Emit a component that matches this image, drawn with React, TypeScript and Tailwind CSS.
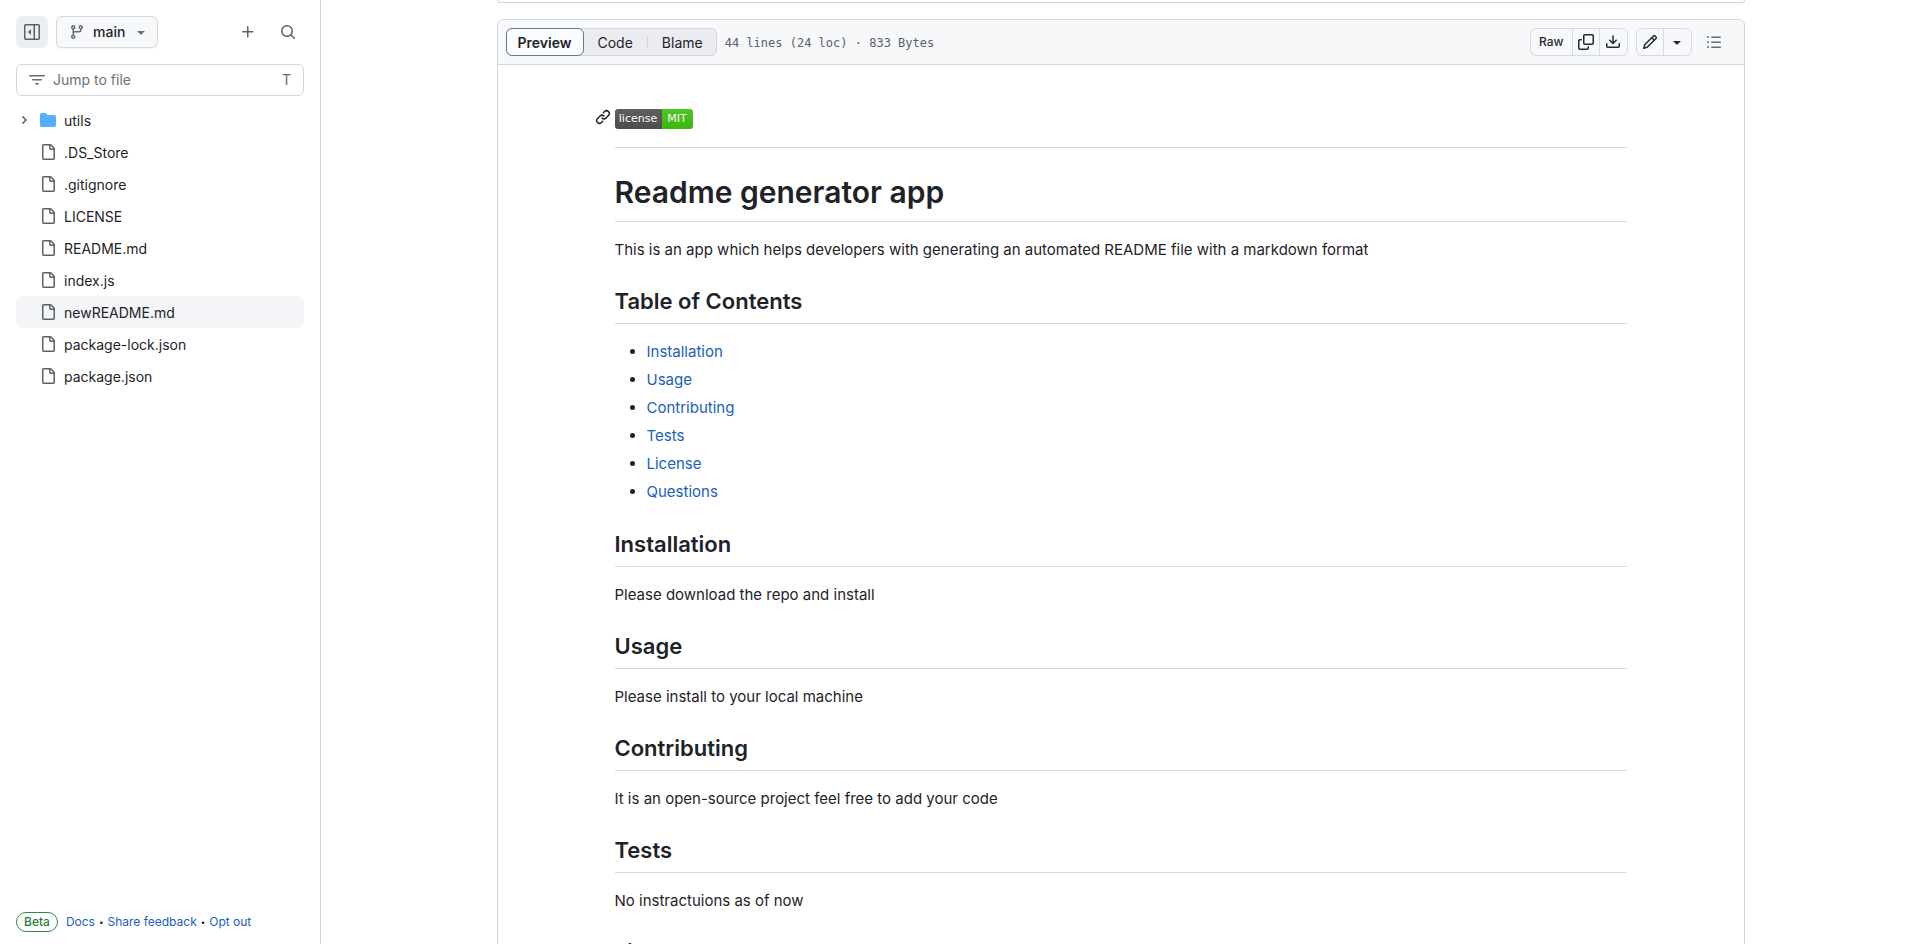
import React from "react";

const paths = {
  sidebar:
    "M4.177 7.823l2.396-2.396A.25.25 0 017 5.604v4.792a.25.25 0 01-.427.177L4.177 8.177a.25.25 0 010-.354z M0 1.75C0 .784.784 0 1.75 0h12.5C15.216 0 16 .784 16 1.75v12.5A1.75 1.75 0 0114.25 16H1.75A1.75 1.75 0 010 14.25Zm1.75-.25a.25.25 0 00-.25.25v12.5c0 .138.112.25.25.25H9.5v-13Zm12.5 13a.25.25 0 00.25-.25V1.75a.25.25 0 00-.25-.25H11v13Z",
  branch:
    "M9.5 3.25a2.25 2.25 0 113 2.122V6A2.5 2.5 0 0110 8.5H6a1 1 0 00-1 1v1.128a2.251 2.251 0 11-1.5 0V5.372a2.25 2.25 0 111.5 0v1.836A2.493 2.493 0 016 7h4a1 1 0 001-1v-.628A2.25 2.25 0 019.5 3.25Zm-6 0a.75.75 0 101.5 0 .75.75 0 00-1.5 0Zm8.25-.75a.75.75 0 100 1.5.75.75 0 000-1.5ZM4.25 12a.75.75 0 100 1.5.75.75 0 000-1.5Z",
  triangle:
    "M4.427 7.427l3.396 3.396a.25.25 0 00.354 0l3.396-3.396A.25.25 0 0011.396 7H4.604a.25.25 0 00-.177.427z",
  plus: "M7.75 2a.75.75 0 01.75.75V7h4.25a.75.75 0 010 1.5H8.5v4.25a.75.75 0 01-1.5 0V8.5H2.75a.75.75 0 010-1.5H7V2.75A.75.75 0 017.75 2Z",
  search:
    "M10.68 11.74a6 6 0 01-7.922-8.982 6 6 0 018.982 7.922l3.04 3.04a.749.749 0 01-.326 1.275.749.749 0 01-.734-.215ZM11.5 7a4.499 4.499 0 10-8.997 0A4.499 4.499 0 0011.5 7Z",
  filter:
    "M.75 3h14.5a.75.75 0 010 1.5H.75a.75.75 0 010-1.5ZM3 7.75A.75.75 0 013.75 7h8.5a.75.75 0 010 1.5h-8.5A.75.75 0 013 7.75Zm3 4a.75.75 0 01.75-.75h2.5a.75.75 0 010 1.5h-2.5a.75.75 0 01-.75-.75Z",
  folder:
    "M1.75 1A1.75 1.75 0 000 2.75v10.5C0 14.216.784 15 1.75 15h12.5A1.75 1.75 0 0016 13.25v-8.5A1.75 1.75 0 0014.25 3H7.5a.25.25 0 01-.2-.1l-.9-1.2C6.07 1.26 5.55 1 5 1H1.75Z",
  file: "M2 1.75C2 .784 2.784 0 3.75 0h6.586c.464 0 .909.184 1.237.513l2.914 2.914c.329.328.513.773.513 1.237v9.586A1.75 1.75 0 0113.25 16h-9.5A1.75 1.75 0 012 14.25Zm1.75-.25a.25.25 0 00-.25.25v12.5c0 .138.112.25.25.25h9.5a.25.25 0 00.25-.25V6h-2.75A1.75 1.75 0 019 4.25V1.5Zm6.75.062V4.25c0 .138.112.25.25.25h2.688l-.011-.013-2.914-2.914-.013-.011Z",
  link: "M7.775 3.275a.75.75 0 001.06 1.06l1.25-1.25a2 2 0 112.83 2.83l-2.5 2.5a2 2 0 01-2.83 0 .75.75 0 00-1.06 1.06 3.5 3.5 0 004.95 0l2.5-2.5a3.5 3.5 0 00-4.95-4.95l-1.25 1.25zm-4.69 9.64a2 2 0 010-2.83l2.5-2.5a2 2 0 012.83 0 .75.75 0 001.06-1.06 3.5 3.5 0 00-4.95 0l-2.5 2.5a3.5 3.5 0 004.95 4.95l1.25-1.25a.75.75 0 00-1.06-1.06l-1.25 1.25a2 2 0 01-2.83 0z",
  copy: "M0 6.75C0 5.784.784 5 1.75 5h1.5a.75.75 0 010 1.5h-1.5a.25.25 0 00-.25.25v7.5c0 .138.112.25.25.25h7.5a.25.25 0 00.25-.25v-1.5a.75.75 0 011.5 0v1.5A1.75 1.75 0 019.25 16h-7.5A1.75 1.75 0 010 14.25Z M5 1.75C5 .784 5.784 0 6.75 0h7.5C15.216 0 16 .784 16 1.75v7.5A1.75 1.75 0 0114.25 11h-7.5A1.75 1.75 0 015 9.25Zm1.75-.25a.25.25 0 00-.25.25v7.5c0 .138.112.25.25.25h7.5a.25.25 0 00.25-.25v-7.5a.25.25 0 00-.25-.25Z",
  download:
    "M2.75 14A1.75 1.75 0 011 12.25v-2.5a.75.75 0 011.5 0v2.5c0 .138.112.25.25.25h10.5a.25.25 0 00.25-.25v-2.5a.75.75 0 011.5 0v2.5A1.75 1.75 0 0113.25 14Z M7.25 7.689V2a.75.75 0 011.5 0v5.689l1.97-1.969a.749.749 0 111.06 1.06l-3.25 3.25a.749.749 0 01-1.06 0L4.22 6.78a.749.749 0 111.06-1.06l1.97 1.969Z",
  pencil:
    "M11.013 1.427a1.75 1.75 0 012.474 0l1.086 1.086a1.75 1.75 0 010 2.474l-8.61 8.61c-.21.21-.47.364-.756.445l-3.251.93a.75.75 0 01-.927-.928l.929-3.25c.081-.286.235-.547.445-.758l8.61-8.61Zm.176 4.823L9.75 4.81l-6.286 6.287a.253.253 0 00-.064.108l-.558 1.953 1.953-.558a.253.253 0 00.108-.064Zm1.238-3.763a.25.25 0 00-.354 0L10.811 3.75l1.439 1.44 1.263-1.263a.25.25 0 000-.354Z",
  list: "M5.75 2.5h8.5a.75.75 0 010 1.5h-8.5a.75.75 0 010-1.5Zm0 5h8.5a.75.75 0 010 1.5h-8.5a.75.75 0 010-1.5Zm0 5h8.5a.75.75 0 010 1.5h-8.5a.75.75 0 010-1.5ZM2 14a1 1 0 110-2 1 1 0 010 2Zm1-6a1 1 0 11-2 0 1 1 0 012 0ZM2 4a1 1 0 110-2 1 1 0 010 2Z",
};

function Icon({ name }: { name: keyof typeof paths }) {
  return (
    <svg viewBox="0 0 16 16" fill="currentColor" aria-hidden="true" className="size-4 shrink-0">
      <path d={paths[name]} />
    </svg>
  );
}

function Chevron() {
  return (
    <svg viewBox="0 0 12 12" fill="currentColor" aria-hidden="true" className="size-3 shrink-0">
      <path d="M4.7 10c-.2 0-.4-.1-.5-.2-.3-.3-.3-.8 0-1.1L6.9 6 4.2 3.3c-.3-.3-.3-.8 0-1.1.3-.3.8-.3 1.1 0l3.3 3.2c.3.3.3.8 0 1.1L5.3 9.7c-.2.2-.4.3-.6.3Z" />
    </svg>
  );
}

const files = [
  ".DS_Store",
  ".gitignore",
  "LICENSE",
  "README.md",
  "index.js",
  "newREADME.md",
  "package-lock.json",
  "package.json",
];

const contents = ["Installation", "Usage", "Contributing", "Tests", "License", "Questions"];

const sections = [
  { title: "Installation", text: "Please download the repo and install" },
  { title: "Usage", text: "Please install to your local machine" },
  { title: "Contributing", text: "It is an open-source project feel free to add your code" },
  { title: "Tests", text: "No instractuions as of now" },
];

function Dot() {
  return <span className="px-1 text-[8px] text-[#1f2328]">•</span>;
}

function Sidebar() {
  return (
    <aside className="flex w-[321px] shrink-0 flex-col border-r border-[#d0d7de] p-4 pb-3">
      <div className="flex items-center gap-2">
        <button
          aria-label="Collapse file tree"
          className="flex size-8 items-center justify-center rounded-md bg-[#eceef2] text-[#59616b]"
        >
          <Icon name="sidebar" />
        </button>
        <button className="flex h-8 items-center gap-2 rounded-md border border-[#d3d9df] bg-[#f6f8fa] pr-2 pl-3 text-sm font-medium shadow-xs">
          <span className="text-[#656d76]">
            <Icon name="branch" />
          </span>
          main
          <span className="text-[#656d76]">
            <Icon name="triangle" />
          </span>
        </button>
        <div className="ml-auto flex gap-2 text-[#59616b]">
          <button aria-label="Add file" className="flex size-8 items-center justify-center">
            <Icon name="plus" />
          </button>
          <button aria-label="Search this repository" className="flex size-8 items-center justify-center">
            <Icon name="search" />
          </button>
        </div>
      </div>

      <label className="mt-4 flex h-8 items-center gap-2 rounded-md border border-[#d0d7de] px-3 text-sm text-[#656d76]">
        <Icon name="filter" />
        <input
          type="text"
          aria-label="Jump to file"
          placeholder="Jump to file"
          className="min-w-0 flex-1 bg-transparent outline-none placeholder:text-[#6a727b]"
        />
        <kbd className="font-[Inter,sans-serif]">T</kbd>
      </label>

      <nav aria-label="Files" className="mt-2 flex flex-col text-sm">
        <a href="#utils" className="flex h-8 items-center rounded-md">
          <span className="flex w-6 justify-start pl-0.5 text-[#59616b]">
            <Chevron />
          </span>
          <span className="mr-2 text-[#54aeff]">
            <Icon name="folder" />
          </span>
          <span className="pt-px">utils</span>
        </a>
        {files.map((file) => (
          <a
            key={file}
            href={`#${file}`}
            className={`flex h-8 items-center gap-2 rounded-md pl-6 ${file === "newREADME.md" ? "bg-[#f4f5f8]" : ""}`}
          >
            <span className="text-[#59616b]">
              <Icon name="file" />
            </span>
            <span className="pt-px">{file}</span>
          </a>
        ))}
      </nav>

      <footer className="mt-auto flex items-center text-xs text-[#1a60bd]">
        <span className="mr-2 rounded-full border border-[#2c8a47] px-[7px] text-xs leading-[18px] font-medium text-[#1f7d3a]">
          Beta
        </span>
        <a href="#docs">Docs</a>
        <Dot />
        <a href="#feedback">Share feedback</a>
        <Dot />
        <a href="#opt-out">Opt out</a>
      </footer>
    </aside>
  );
}

function Toolbar() {
  return (
    <div className="flex h-[45px] items-center rounded-t-md border-b border-[#d0d7de] bg-[#f6f8fa] pr-4 pl-2">
      <div className="flex h-7 items-center rounded-md bg-[#eaecf1] text-sm inset-ring inset-ring-[#d3d8df]">
        <button className="h-7 rounded-md border border-[#6e7681] bg-[#fbfcfd] px-[11px] pt-px font-semibold">
          Preview
        </button>
        <button className="px-3.5 pt-px">Code</button>
        <span className="h-3 w-px bg-[#d0d7de]" />
        <button className="px-3.5 pt-px">Blame</button>
      </div>
      <p className="ml-2 pt-px font-['DejaVu_Sans_Mono',monospace] text-xs text-[#59616b]">
        44 lines (24 loc) · 833 Bytes
      </p>
      <div className="ml-auto flex h-7 divide-x divide-[#d5dae0] rounded-md border border-[#d5dae0] text-[#24292f]">
        <button className="px-2 text-xs font-medium">Raw</button>
        <button aria-label="Copy raw file" className="flex w-[27px] items-center justify-center">
          <Icon name="copy" />
        </button>
        <button aria-label="Download raw file" className="flex w-[27px] items-center justify-center">
          <Icon name="download" />
        </button>
      </div>
      <div className="ml-2 flex h-7 divide-x divide-[#d5dae0] rounded-md border border-[#d5dae0] text-[#24292f]">
        <button aria-label="Edit file" className="flex w-[27px] items-center justify-center">
          <Icon name="pencil" />
        </button>
        <button aria-label="More edit options" className="flex w-[27px] items-center justify-center">
          <Icon name="triangle" />
        </button>
      </div>
      <button aria-label="Outline" className="ml-2 flex w-7 items-center justify-center text-[#656d76]">
        <Icon name="list" />
      </button>
    </div>
  );
}

function SectionHeading({ children }: { children: React.ReactNode }) {
  return (
    <h2 className="mt-6 mb-4 border-b border-[#d8dbdf] pb-[7px] text-[22px] leading-[30px] font-semibold">
      {children}
    </h2>
  );
}

function Readme() {
  return (
    <article className="mx-auto max-w-[1012px] pt-8 text-[15px] leading-6">
      <h1 className="relative flex h-[51px] items-start border-b border-[#d8dbdf] pt-3">
        <a href="#license-badge" aria-label="Permalink" className="absolute top-3 -left-5">
          <Icon name="link" />
        </a>
        <a
          href="#license"
          className="flex overflow-hidden rounded-[3px] font-['DejaVu_Sans',sans-serif] text-[11px] leading-5 font-normal text-white text-shadow-2xs"
        >
          <span className="w-[47px] bg-linear-to-b from-[#5f5f5f] to-[#4d4d4d] text-center">license</span>
          <span className="w-[31px] bg-linear-to-b from-[#4dc71f] to-[#3fb60f] text-center">MIT</span>
        </a>
      </h1>
      <h1 className="mt-6 mb-4 border-b border-[#d8dbdf] pb-[9px] text-[30px] leading-10 font-semibold">
        Readme generator app
      </h1>
      <p>This is an app which helps developers with generating an automated README file with a markdown format</p>
      <SectionHeading>Table of Contents</SectionHeading>
      <ul className="flex list-disc flex-col gap-1 pb-px pl-8">
        {contents.map((item) => (
          <li key={item}>
            <a href={`#${item.toLowerCase()}`} className="text-[#1a60bd]">
              {item}
            </a>
          </li>
        ))}
      </ul>
      {sections.map(({ title, text }) => (
        <section key={title}>
          <SectionHeading>{title}</SectionHeading>
          <p>{text}</p>
        </section>
      ))}
      <SectionHeading>License</SectionHeading>
    </article>
  );
}

export default function App() {
  return (
    <div className="flex h-screen overflow-hidden bg-white font-[Inter,sans-serif] text-[#1f2328]">
      <Sidebar />
      <main className="min-w-0 flex-1 overflow-hidden px-4">
        <div className="mx-auto flex max-w-[1248px] flex-col gap-4">
          <div className="h-[3px] rounded-b-md border border-t-0 border-[#d0d7de]" />
          <div className="rounded-md border border-[#d0d7de]">
            <Toolbar />
            <Readme />
          </div>
        </div>
      </main>
    </div>
  );
}
